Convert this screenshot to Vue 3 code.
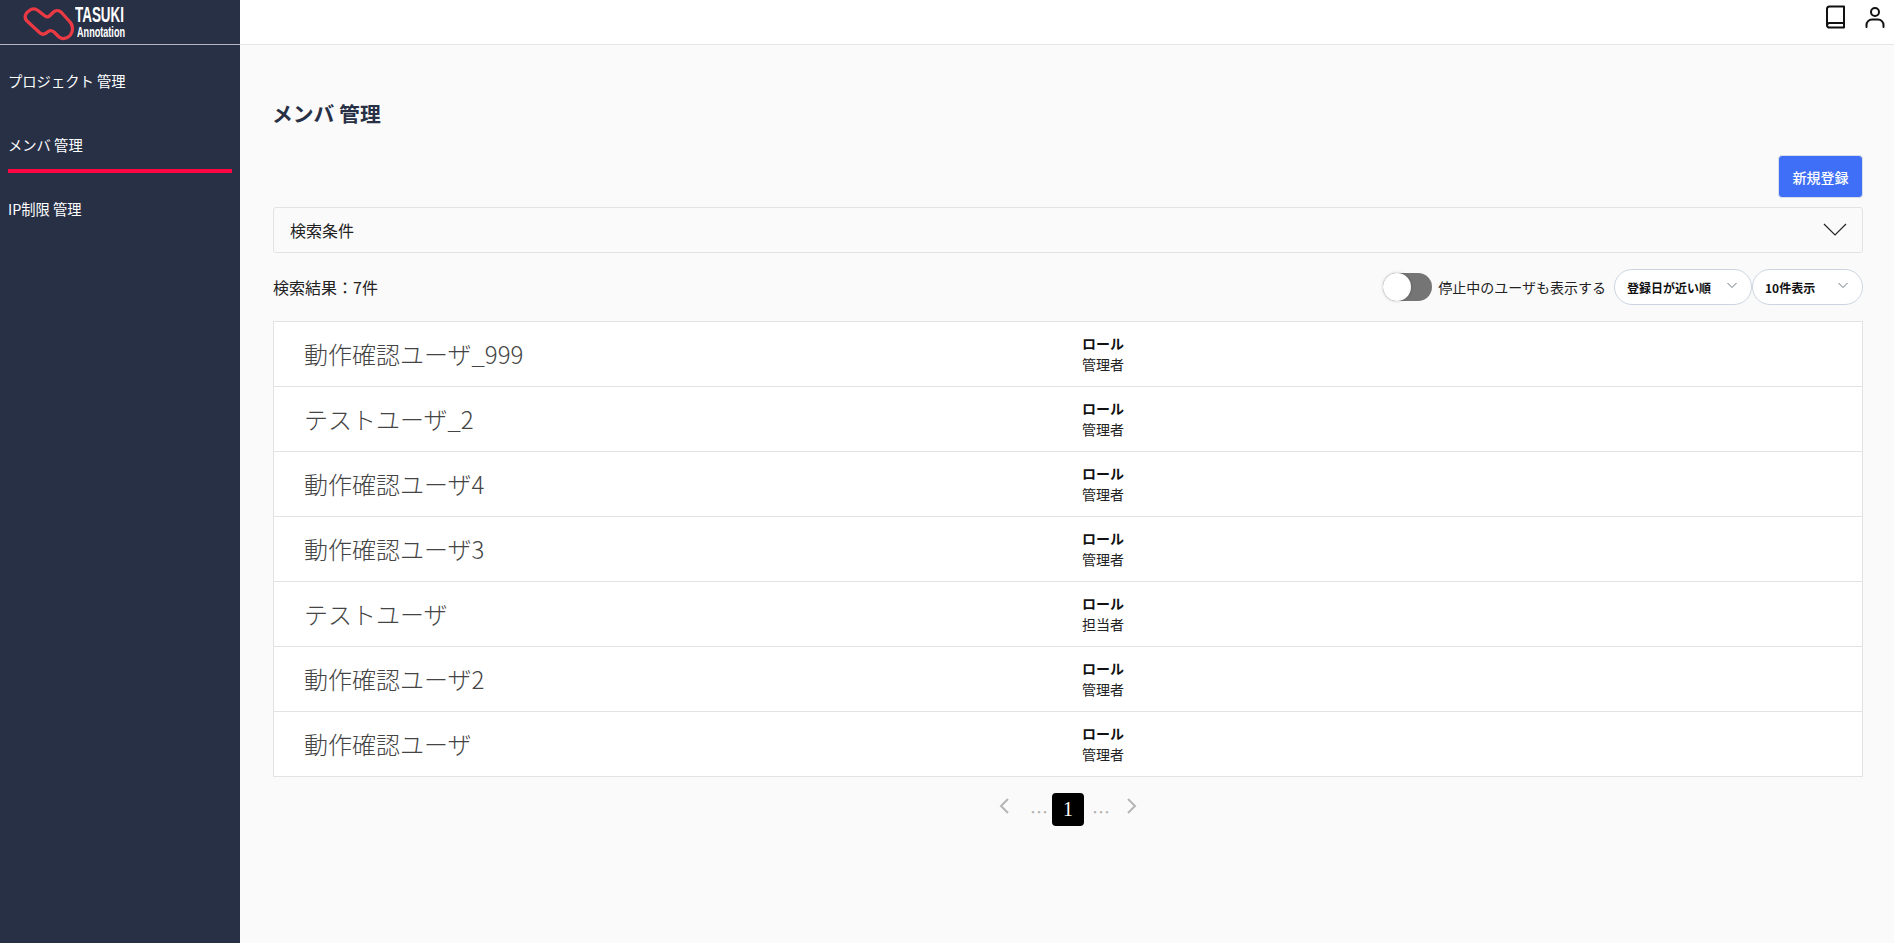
<script setup>
const users = [
  { name: '動作確認ユーザ_999', role: '管理者' },
  { name: 'テストユーザ_2', role: '管理者' },
  { name: '動作確認ユーザ4', role: '管理者' },
  { name: '動作確認ユーザ3', role: '管理者' },
  { name: 'テストユーザ', role: '担当者' },
  { name: '動作確認ユーザ2', role: '管理者' },
  { name: '動作確認ユーザ', role: '管理者' },
]
const nav = ['プロジェクト 管理', 'メンバ 管理', 'IP制限 管理']
</script>

<template>
  <div class="shell">
    <aside class="side">
      <div class="brand">
        <svg class="logo" width="50" height="36" viewBox="0 0 50 36">
          <path d="M6.500 4.500C9 2.500 12 2.500 15 4.500L22 10C24 11.500 25.500 11 27 9.500L30 6.500C32.500 4 36 4 38.500 6.500L47 16C50 19 50.500 25 47.500 29C44 33 39 33.500 36 31L31 26C28.500 24 26.500 24 24.500 26C22 28.500 19.500 29 17 27L4 15C1 12 1.500 7.500 6.500 4.500Z" fill="none" stroke="#ec3a44" stroke-width="3.2" stroke-linejoin="round"/>
        </svg>
        <div class="brand-text">
          <div class="t1">TASUKI</div>
          <div class="t2">Annotation</div>
        </div>
      </div>
      <nav class="nav">
        <a v-for="(n, i) in nav" :key="n" class="nav-item" :class="{ active: i === 1 }">{{ n }}</a>
      </nav>
    </aside>
    <div class="right">
      <header class="top">
        <svg width="24" height="24" viewBox="0 0 24 24" class="ic book" fill="none" stroke="#111" stroke-width="2" stroke-linejoin="round" stroke-linecap="round">
          <path d="M4 20.500V4a2.500 2.500 0 0 1 2.500-2.500H21v21H6.500A2.500 2.500 0 0 1 4 20.500Zm0 0A2.500 2.500 0 0 1 6.500 18H21"/>
        </svg>
        <svg width="24" height="24" viewBox="0 0 24 24" class="ic user" fill="none" stroke="#111" stroke-width="2" stroke-linecap="round">
          <circle cx="12" cy="7" r="4"/>
          <path d="M3.500 22v-2a5.500 5.500 0 0 1 5.500-5.500h6a5.500 5.500 0 0 1 5.500 5.500v2"/>
        </svg>
      </header>
      <main class="main">
        <h1 class="title">メンバ 管理</h1>
        <div class="actions"><button class="new">新規登録</button></div>
        <div class="search">
          <span>検索条件</span>
          <svg width="24" height="14" viewBox="0 0 24 14" fill="none" stroke="#222" stroke-width="1.2"><path d="M1 1l11 11L23 1"/></svg>
        </div>
        <div class="bar">
          <div class="count">検索結果：7件</div>
          <div class="tools">
            <span class="toggle"><span class="thumb"></span></span>
            <span class="tlabel">停止中のユーザも表示する</span>
            <div class="sel s1"><span>登録日が近い順</span><svg width="10" height="7" viewBox="0 0 10 7" fill="none" stroke="#6b7280" stroke-width="1"><path d="M.5 1l4.500 4.500L9.500 1"/></svg></div>
            <div class="sel s2"><span>10件表示</span><svg width="10" height="7" viewBox="0 0 10 7" fill="none" stroke="#6b7280" stroke-width="1"><path d="M.5 1l4.500 4.500L9.500 1"/></svg></div>
          </div>
        </div>
        <ul class="list">
          <li v-for="u in users" :key="u.name" class="row">
            <div class="name">{{ u.name }}</div>
            <div class="role"><div class="rl">ロール</div><div>{{ u.role }}</div></div>
          </li>
        </ul>
        <div class="pager">
          <svg class="chev" width="10" height="16" viewBox="0 0 10 16" fill="none" stroke="#b5b5b5" stroke-width="2"><path d="M9 1L2 8l7 7"/></svg>
          <span class="dots dl">…</span>
          <span class="cur">1</span>
          <span class="dots dr">…</span>
          <svg class="chev" width="10" height="16" viewBox="0 0 10 16" fill="none" stroke="#b5b5b5" stroke-width="2"><path d="M1 1l7 7-7 7"/></svg>
        </div>
      </main>
    </div>
  </div>
</template>

<style>
html, body { margin: 0; padding: 0; background: #fafafa; }
</style>

<style scoped>
.shell {
  display: flex; height: 943px; overflow: hidden;
  font-family: "Noto Sans CJK JP", "Noto Sans", sans-serif;
  color: #222;
}
.side { width: 240px; flex: none; background: #283046; color: #fff; }
.brand {
  height: 44px; border-bottom: 1px solid #b4b7bf;
  display: flex; align-items: center; box-sizing: content-box;
  padding-left: 23px;
}
.logo { display: block; flex: none; overflow: visible; margin-top: 4px; }
.brand-text { margin-left: 2px; font-family: "Liberation Sans", sans-serif; color: #fff; font-weight: 700; white-space: nowrap; }
.t1 { font-size: 22px; line-height: 20px; transform-origin: left; transform: scaleX(.61); }
.t2 { font-size: 14px; line-height: 14px; margin-left: 2px; transform-origin: left; transform: scaleX(.65); }
.nav { display: flex; flex-direction: column; padding: 0 8px; }
.nav-item {
  display: block; height: 64px; line-height: 20px; padding-top: 26px; box-sizing: border-box;
  font-size: 14.3px; color: #fff; white-space: pre;
}
.nav-item.active { border-bottom: 4px solid #fb0542; }
.right { flex: 1; min-width: 0; display: flex; flex-direction: column; }
.top {
  height: 34px; padding-bottom: 10px; background: #fff; border-bottom: 1px solid #e5e5e5; flex: none;
  display: flex; align-items: center; justify-content: flex-end;
  padding-right: 7px; box-sizing: content-box;
}
.ic { display: block; }
.user { margin-left: 16px; }
.main { flex: 1; padding: 0 31px 0 33px; background: #fafafa; }
.title { margin: 0; padding-top: 53px; font-size: 20.8px; line-height: 30px; font-weight: 700; color: #283046; margin-left: -1px; }
.actions { display: flex; justify-content: flex-end; margin-top: 27px; }
.new {
  width: 85px; height: 43px; background: #3e6ff6; color: #fff; border: 1px solid #d8dee9;
  border-radius: 4px; font: 500 14px "Noto Sans CJK JP", sans-serif; padding: 0;
}
.search {
  margin-top: 9px; height: 46px; box-sizing: border-box; border: 1px solid #e3e3e3; border-radius: 3px;
  display: flex; align-items: center; justify-content: space-between;
  padding: 0 15px 0 16px; font-size: 16px; color: #222;
}
.bar { display: flex; justify-content: space-between; align-items: center; height: 36px; margin-top: 16px; }
.count { font-size: 16px; color: #222; }
.tools { display: flex; align-items: center; }
.toggle { width: 49px; height: 28px; border-radius: 14px; background: #757575; position: relative; display: block; }
.thumb { position: absolute; left: 0; top: 0; width: 28px; height: 28px; border-radius: 50%; background: #fff; box-shadow: 0 0 3px rgba(0,0,0,.25); }
.tlabel { font-size: 14px; margin-left: 6px; margin-right: 8px; color: #222; }
.sel {
  height: 36px; box-sizing: border-box; border: 1px solid #cbd5e1; border-radius: 18px; background: #fff;
  display: flex; align-items: center; justify-content: space-between;
  font-size: 12px; font-weight: 700; color: #111; padding: 0 14px 4px 12px;
}
.sel span { margin-top: 4px; }
.s1 { width: 138px; }
.s2 { width: 111px; }
.list { list-style: none; margin: 16px 0 0; padding: 0; background: #fff; border: 1px solid #e3e3e3; border-bottom: 0; }
.row { display: flex; height: 65px; box-sizing: border-box; border-bottom: 1px solid #e3e3e3; padding-left: 30px; align-items: center; }
.name { width: 778px; font-size: 24px; font-weight: 300; color: #444; flex: none; margin-top: -2px; }
.role { font-size: 14px; line-height: 21px; color: #222; }
.rl { font-weight: 700; color: #111; }
.pager { display: flex; align-items: center; justify-content: center; margin-top: 16px; height: 33px; color: #b5b5b5; }
.chev { margin-top: -8px; }
.dots { font-size: 18px; width: 14px; text-align: center; margin-top: 3px; color: #b5b5b5; }
.dl { margin-left: 21px; margin-right: 8px; }
.dr { margin-left: 8px; margin-right: 21px; }
.cur { width: 32px; height: 33px; background: #000; color: #fff; border-radius: 4px; display: flex; align-items: center; justify-content: center; font-family: "Liberation Serif", serif; font-size: 20px; }
</style>
